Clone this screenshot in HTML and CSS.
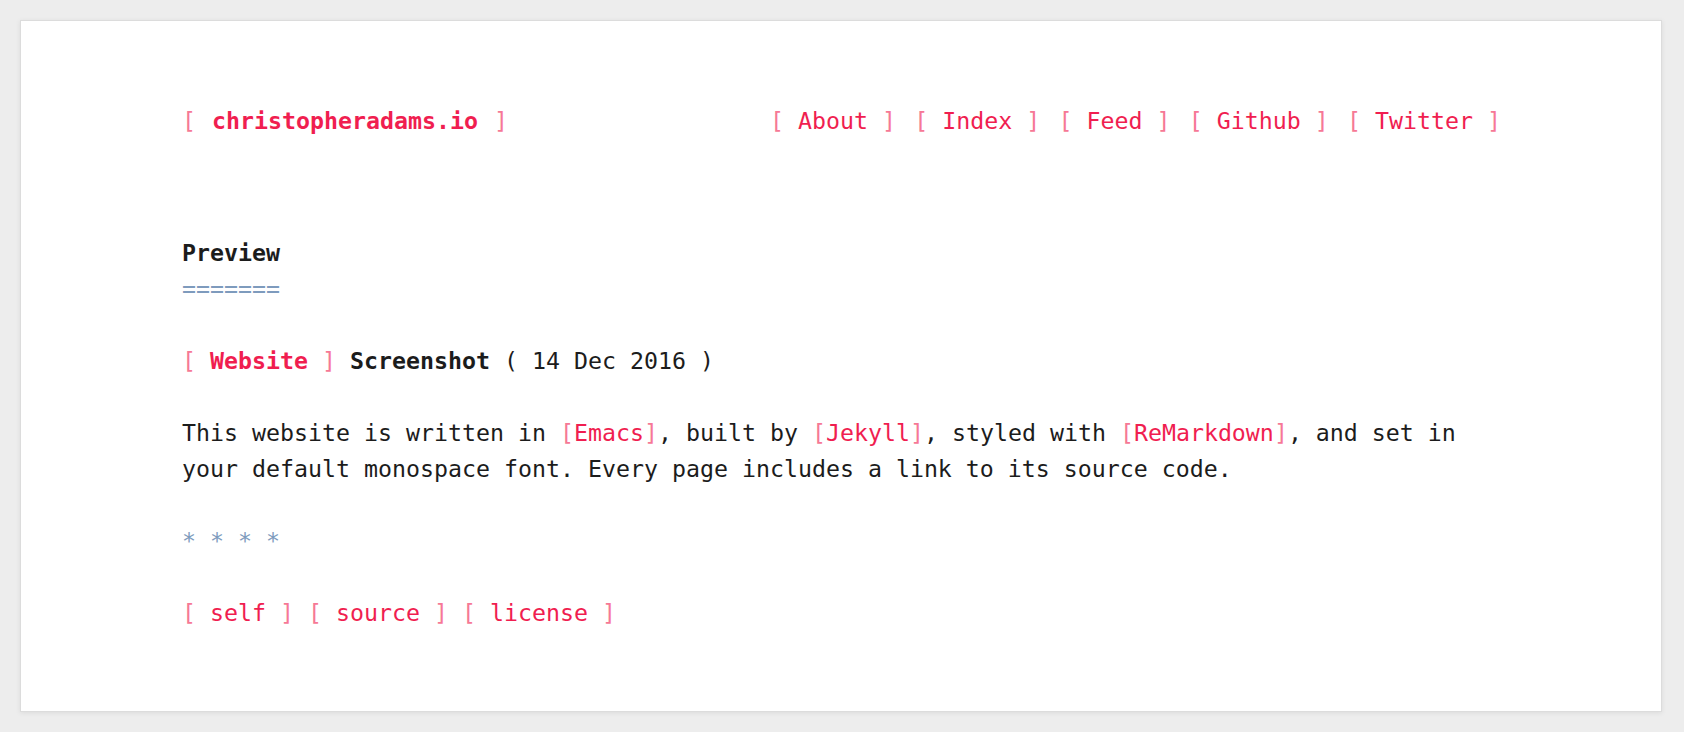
FILE: index.html
```html
<!DOCTYPE html>
<html lang="en">
<head>
<meta charset="utf-8">
<title>christopheradams.io</title>
<link rel="stylesheet" href="styles.css">
</head>
<body>
<div class="card">
  <div class="content">
    <header class="site-header">
      <a class="link title" href="#"><span class="br">[</span> <strong>christopheradams.io</strong> <span class="br">]</span></a>
      <nav class="nav">
        <a class="link" href="#"><span class="br">[</span> About <span class="br">]</span></a>
        <a class="link" href="#"><span class="br">[</span> Index <span class="br">]</span></a>
        <a class="link" href="#"><span class="br">[</span> Feed <span class="br">]</span></a>
        <a class="link" href="#"><span class="br">[</span> Github <span class="br">]</span></a>
        <a class="link" href="#"><span class="br">[</span> Twitter <span class="br">]</span></a>
      </nav>
    </header>

    <main class="post">
      <h1 class="heading">Preview<span class="underline">=======</span></h1>
      <p class="meta"><a class="link" href="#"><span class="br">[</span> <strong>Website</strong> <span class="br">]</span></a> <strong>Screenshot</strong> ( 14 Dec 2016 )</p>
      <p class="text">This website is written in <a class="link" href="#"><span class="br">[</span>Emacs<span class="br">]</span></a>, built by <a class="link" href="#"><span class="br">[</span>Jekyll<span class="br">]</span></a>, styled with <a class="link" href="#"><span class="br">[</span>ReMarkdown<span class="br">]</span></a>, and set in your default monospace font. Every page includes a link to its source code.</p>
      <p class="rule">* * * *</p>
      <p class="footer-links"><a class="link" href="#"><span class="br">[</span> self <span class="br">]</span></a> <a class="link" href="#"><span class="br">[</span> source <span class="br">]</span></a> <a class="link" href="#"><span class="br">[</span> license <span class="br">]</span></a></p>
    </main>
  </div>
</div>
</body>
</html>
```

FILE: styles.css
```css
html, body {
  margin: 0;
  padding: 0;
  background: #ededed;
  overflow: hidden;
}

body {
  font-family: "DejaVu Sans Mono", "Liberation Mono", monospace;
  font-size: 23.25px;
  line-height: 36px;
  color: #1c1c1c;
}

.card {
  margin: 20px 22px 20px 20px;
  background: #fff;
  border: 1px solid #dcdcdc;
  box-shadow: 0 1px 5px rgba(0, 0, 0, 0.08);
  padding: 82px 0 80px;
}

.content {
  max-width: 1320px;
  margin: 0 auto;
  padding-left: 2px;
}

.site-header {
  display: flex;
  justify-content: space-between;
  margin-bottom: 96px;
}

.title {
  word-spacing: 2px;
}

.nav {
  display: flex;
  gap: 18.25px;
  margin-right: 1px;
}

.link {
  color: #f01e50;
  text-decoration: none;
  white-space: pre;
}

.br {
  color: #f67896;
}

strong {
  font-weight: bold;
}

.heading {
  font-size: inherit;
  line-height: inherit;
  font-weight: bold;
  margin: 0 0 36px;
}

.underline {
  display: block;
  font-weight: normal;
  color: #7e9bbd;
}

.meta,
.text,
.rule,
.footer-links {
  margin: 0 0 36px;
}

.footer-links {
  margin-bottom: 0;
}

.rule {
  color: #7e9bbd;
}
```
